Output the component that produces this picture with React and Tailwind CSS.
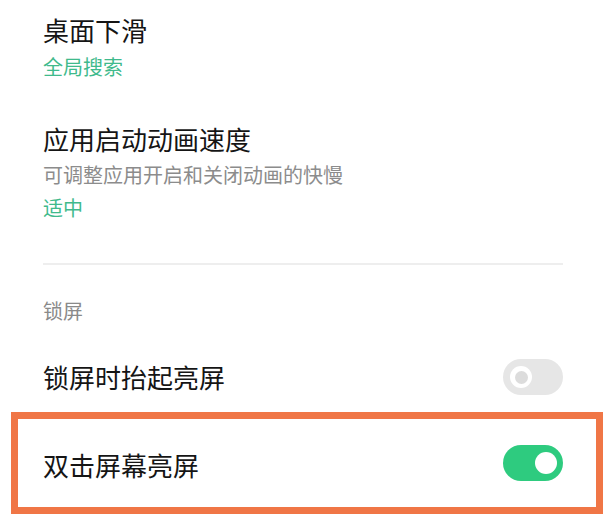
export default function App() {
  const font = { fontFamily: '"Noto Sans CJK SC", "Noto Sans", sans-serif' };
  return (
    <div className="w-[612px] h-[525px] bg-white overflow-hidden relative" style={font}>
      <div className="pl-[43px] pr-[49px]">
        <div className="pt-[12px] text-[26px] leading-[36px] text-[#151515]">桌面下滑</div>
        <div className="mt-[5px] text-[20px] leading-[28px] text-[#3fba8c]">全局搜索</div>
        <div className="mt-[40px] text-[26px] leading-[36px] text-[#151515]">应用启动动画速度</div>
        <div className="mt-[4px] text-[20px] leading-[28px] text-[#8c8c8c]">可调整应用开启和关闭动画的快慢</div>
        <div className="mt-[5px] text-[20px] leading-[28px] text-[#3fba8c]">适中</div>
        <div className="mt-[41px] h-[2px] bg-[#eeeeee]" />
        <div className="mt-[32px] text-[20px] leading-[28px] text-[#8a8a8a]">锁屏</div>
        <div className="mt-[17px] h-[70px] flex items-center justify-between">
          <span className="text-[26px] leading-[36px] text-[#151515]">锁屏时抬起亮屏</span>
          <div className="w-[60px] h-[36px] rounded-full bg-[#e6e6e6] flex items-center pl-[7px]">
            <div className="w-[22px] h-[22px] rounded-full bg-white flex items-center justify-center">
              <div className="w-[13px] h-[13px] rounded-full bg-[#dcdcdc]" />
            </div>
          </div>
        </div>
      </div>
      <div className="ml-[11px] w-[592px] h-[102px] border-[7px] border-[#f07646] flex items-center justify-between pl-[25px] pr-[33px]">
        <span className="text-[26px] leading-[36px] text-[#151515] mt-[3px]">双击屏幕亮屏</span>
        <div className="w-[60px] h-[36px] rounded-full bg-[#2ecb7f] flex items-center justify-end pr-[6px]">
          <div className="w-[22px] h-[22px] rounded-full bg-white" />
        </div>
      </div>
    </div>
  );
}
